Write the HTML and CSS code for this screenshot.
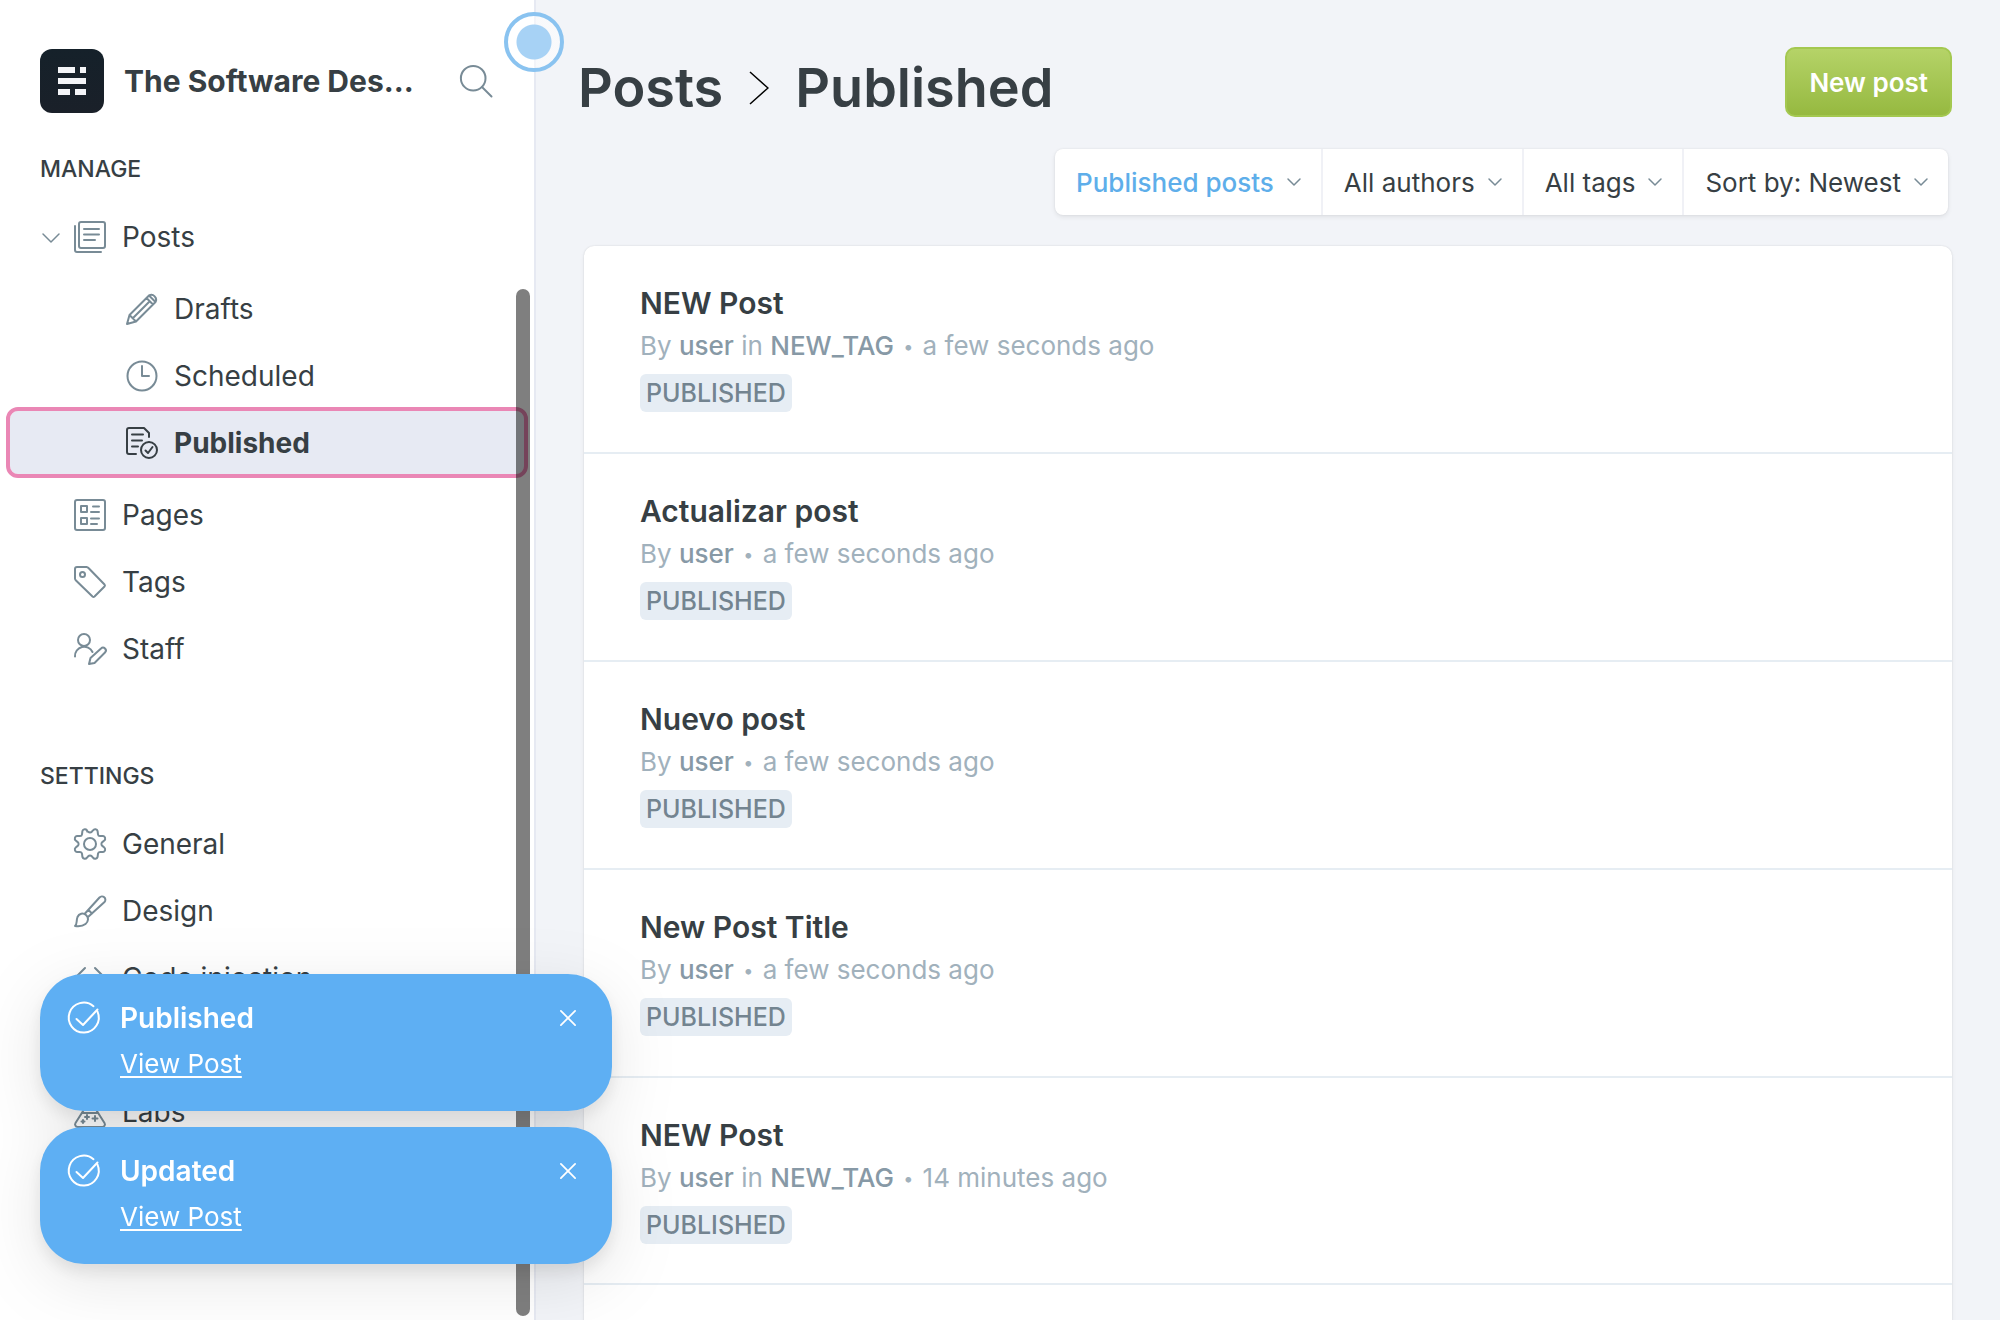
FILE: index.html
```html
<!DOCTYPE html>
<html lang="en">
<head>
<meta charset="utf-8">
<title>Posts</title>
<link rel="stylesheet" href="styles.css">
</head>
<body>
<div class="app">
  <aside class="sidebar">
    <header class="brand">
      <svg class="brand-logo" viewBox="0 0 64 64" aria-hidden="true">
        <defs><linearGradient id="logo-fill" x1="0" y1="0" x2="0" y2="1"><stop offset="0" stop-color="#15212a"/><stop offset="1" stop-color="#1a2029"/></linearGradient></defs>
        <rect width="64" height="64" rx="12" fill="url(#logo-fill)"/>
        <path fill="#f4f5f8" d="M18 18h17v6H18zM40 18h6v6h-6zM18 29h28v6H18zM18 40h12v6H18zM35 40h11v6H35z"/>
      </svg>
      <span class="brand-name">The Software Des...</span>
      <button class="icon-button" type="button" aria-label="Search">
        <svg class="icon" viewBox="0 0 32 32"><circle cx="13.200" cy="13.200" r="12.300"/><path d="M22 22l9.500 9.500"/></svg>
      </button>
    </header>

    <nav class="nav">
      <h2 class="nav-heading">Manage</h2>
      <ul class="nav-list">
        <li>
          <a class="nav-link" href="#posts">
            <svg class="icon caret" viewBox="0 0 18 32"><path d="M1 13l8 8 8-8"/></svg>
            <svg class="icon" viewBox="0 0 32 32"><rect x="5" y="1" width="26" height="26" rx="2"/><path d="M1 5v24a2 2 0 0 0 2 2h24M10 8h15M10 13.500h15M10 19h11"/></svg>
            Posts
          </a>
          <ul class="nav-list nav-sublist">
            <li><a class="nav-link" href="#drafts">
              <svg class="icon" viewBox="0 0 32 32"><path d="M1 31l2.500-9L23 2.500a4.800 4.800 0 0 1 6.500 6.500L10 28.500zM3.500 22l6.500 6.500M20.500 5l6.500 6.500M23 2.500l6.500 6.500M7 25L23.500 8.500"/></svg>
              Drafts</a></li>
            <li><a class="nav-link" href="#scheduled">
              <svg class="icon" viewBox="0 0 32 32"><circle cx="16" cy="16" r="14.500"/><path d="M16 6v10h7"/></svg>
              Scheduled</a></li>
            <li><a class="nav-link is-active" href="#published" aria-current="page">
              <svg class="icon" viewBox="0 0 32 32"><path d="M10 27H3a2 2 0 0 1-2-2V3a2 2 0 0 1 2-2h15l5 5v4M6 7.500h11M6 13.500h10M6 19.500h6"/><circle cx="23" cy="23" r="8"/><path d="M19.500 23.500l2.500 2.500 4.500-6"/></svg>
              Published</a></li>
          </ul>
        </li>
        <li><a class="nav-link nav-link-inset" href="#pages">
          <svg class="icon" viewBox="0 0 32 32"><rect x="1" y="1" width="30" height="30" rx="2"/><path d="M7 7h6v6H7zM7 19h6v6H7zM19 7.500h6M17 13h8M17 19.500h8M17 25h6"/></svg>
          Pages</a></li>
        <li><a class="nav-link nav-link-inset" href="#tags">
          <svg class="icon" viewBox="0 0 32 32"><path d="M1 3v9.500a3 3 0 0 0 1 2L18.500 30.500a1.500 1.500 0 0 0 2 0l10-10a1.500 1.500 0 0 0 0-2L14.500 2a3 3 0 0 0-2-1H3a2 2 0 0 0-2 2z"/><circle cx="8.500" cy="8.500" r="2.500"/></svg>
          Tags</a></li>
        <li><a class="nav-link nav-link-inset" href="#staff">
          <svg class="icon" viewBox="0 0 32 32"><circle cx="10" cy="7" r="6"/><path d="M1 23.500a9.200 9.200 0 0 1 17.500-4.500M15 31l1.500-6L27 15.500a2.600 2.600 0 0 1 4 4L20.500 30z"/></svg>
          Staff</a></li>
      </ul>

      <h2 class="nav-heading nav-heading-settings">Settings</h2>
      <ul class="nav-list">
        <li><a class="nav-link nav-link-inset" href="#general">
          <svg class="icon" viewBox="0 0 32 32"><circle cx="16" cy="16" r="6"/><path d="M13.300 3.600a2.500 2.500 0 0 0-4.900-.5L8 6.300a2 2 0 0 1-2 1.700H3a2.600 2.600 0 0 0-1.300 4.500l2 1.600a2.500 2.500 0 0 1 0 3.800l-2 1.600A2.600 2.600 0 0 0 3 24h3a2 2 0 0 1 2 1.700l.4 3.200a2.600 2.600 0 0 0 4.600.8l1.200-1.400a2.500 2.500 0 0 1 3.600 0l1.200 1.400a2.600 2.600 0 0 0 4.600-.8l.4-3.200a2 2 0 0 1 2-1.700h3a2.600 2.600 0 0 0 1.300-4.500l-2-1.600a2.500 2.500 0 0 1 0-3.800l2-1.600A2.600 2.600 0 0 0 29 8h-3a2 2 0 0 1-2-1.700l-.4-3.200a2.600 2.600 0 0 0-4.600-.8l-1.200 1.400a2.500 2.500 0 0 1-3.600 0z"/></svg>
          General</a></li>
        <li><a class="nav-link nav-link-inset" href="#design">
          <svg class="icon" viewBox="0 0 32 32"><path d="M1 31c2.500-2 1-5 2.500-9 1.500-3.500 5.500-4.500 8.500-2s2.500 6.500-.5 9-7 2.500-10.500 2zM11 18.500L25.500 2.500a3.300 3.300 0 0 1 5 4.500L14 22M14.500 15l3.500 3.500"/></svg>
          Design</a></li>
        <li><a class="nav-link nav-link-inset" href="#code">
          <svg class="icon" viewBox="0 0 32 32"><path d="M11 6L1 16l10 10M21 6l10 10-10 10"/></svg>
          Code injection</a></li>
        <li><a class="nav-link nav-link-inset" href="#integrations" aria-label="Integrations"></a></li>
        <li><a class="nav-link nav-link-inset" href="#labs">
          <svg class="icon" viewBox="0 0 32 32"><path d="M9 1h14M11 1v11L1.500 27a2.600 2.600 0 0 0 2.500 4h24a2.600 2.600 0 0 0 2.500-4L21 12V1M8 17h16M13 19v4M11 21h4M21 20v5M18.500 22.500h5M9 24v3M7.500 25.500h3"/></svg>
          Labs</a></li>
      </ul>
    </nav>
    <div class="scroll-thumb"></div>
    <div class="beacon"></div>
  </aside>

  <main class="content">
    <header class="page-header">
      <h1 class="page-title">
        <a href="#posts">Posts</a>
        <svg class="title-caret" viewBox="0 0 20 34" aria-hidden="true"><path d="M1 1l18 16L1 33"/></svg>
        Published
      </h1>
      <button class="primary-button" type="button">New post</button>
    </header>

    <div class="filters">
      <button class="filter is-selected" type="button">Published posts <svg class="icon filter-caret" viewBox="0 0 12 10"><path d="M0 2l6 6 6-6"/></svg></button>
      <button class="filter" type="button">All authors <svg class="icon filter-caret" viewBox="0 0 12 10"><path d="M0 2l6 6 6-6"/></svg></button>
      <button class="filter" type="button">All tags <svg class="icon filter-caret" viewBox="0 0 12 10"><path d="M0 2l6 6 6-6"/></svg></button>
      <button class="filter" type="button">Sort by: Newest <svg class="icon filter-caret" viewBox="0 0 12 10"><path d="M0 2l6 6 6-6"/></svg></button>
    </div>

    <ol class="post-list">
      <li class="post">
        <h3 class="post-title">NEW Post</h3>
        <p class="post-meta">By <b>user</b> in <b>NEW_TAG</b> <span class="dot">•</span> a few seconds ago</p>
        <span class="badge">Published</span>
      </li>
      <li class="post">
        <h3 class="post-title">Actualizar post</h3>
        <p class="post-meta">By <b>user</b> <span class="dot">•</span> a few seconds ago</p>
        <span class="badge">Published</span>
      </li>
      <li class="post">
        <h3 class="post-title">Nuevo post</h3>
        <p class="post-meta">By <b>user</b> <span class="dot">•</span> a few seconds ago</p>
        <span class="badge">Published</span>
      </li>
      <li class="post">
        <h3 class="post-title">New Post Title</h3>
        <p class="post-meta">By <b>user</b> <span class="dot">•</span> a few seconds ago</p>
        <span class="badge">Published</span>
      </li>
      <li class="post">
        <h3 class="post-title">NEW Post</h3>
        <p class="post-meta">By <b>user</b> in <b>NEW_TAG</b> <span class="dot">•</span> 14 minutes ago</p>
        <span class="badge">Published</span>
      </li>
    </ol>
  </main>
</div>

<div class="toasts" role="status">
  <div class="toast">
    <svg class="icon" viewBox="0 0 32 32"><path d="M25.500 4.200a15 15 0 1 0 4 5.400"/><path d="M8.500 17l6.500 6L29.500 7.500"/></svg>
    <div class="toast-text"><strong class="toast-title">Published</strong><a class="toast-link" href="#view">View Post</a></div>
    <button class="toast-close" type="button" aria-label="Close"><svg class="icon" viewBox="0 0 18 18"><path d="M1 1l16 16M17 1L1 17"/></svg></button>
  </div>
  <div class="toast">
    <svg class="icon" viewBox="0 0 32 32"><path d="M25.500 4.200a15 15 0 1 0 4 5.400"/><path d="M8.500 17l6.500 6L29.500 7.500"/></svg>
    <div class="toast-text"><strong class="toast-title">Updated</strong><a class="toast-link" href="#view">View Post</a></div>
    <button class="toast-close" type="button" aria-label="Close"><svg class="icon" viewBox="0 0 18 18"><path d="M1 1l16 16M17 1L1 17"/></svg></button>
  </div>
</div>
</body>
</html>
```
FILE: styles.css
```css
* { box-sizing: border-box; }

body {
  margin: 0;
  height: 100vh;
  overflow: hidden;
  font-family: Inter, "Liberation Sans", sans-serif;
  font-size: 28px;
  color: #373f44;
  background: #f2f4f8;
}

h1, h2, h3, p, ul, ol { margin: 0; padding: 0; }
ul, ol { list-style: none; }
a { color: inherit; text-decoration: none; }
button { padding: 0; border: 0; background: none; font: inherit; color: inherit; }

.icon {
  flex: none;
  width: 32px;
  height: 32px;
  fill: none;
  stroke: #788b96;
  stroke-width: 2;
  stroke-linecap: round;
  stroke-linejoin: round;
  overflow: visible;
}

.app { display: flex; height: 100vh; }

/* Sidebar */
.sidebar {
  position: relative;
  flex: none;
  width: 536px;
  background: #fff;
  border-right: 2px solid #e6e9f2;
}

.brand {
  display: flex;
  align-items: center;
  gap: 20px;
  padding: 49px 42px 0 40px;
}
.brand-logo { flex: none; width: 64px; height: 64px; }
.brand-name {
  white-space: nowrap;
  font-size: 30px;
  font-weight: 700;
  line-height: 40px;
}
.icon-button { display: flex; margin-left: auto; }

.nav-heading {
  padding: 44px 40px 24px;
  font-size: 23px;
  font-weight: 500;
  line-height: 24px;
  text-transform: uppercase;
}
.nav-heading-settings { padding-top: 84px; }

.nav-list { display: grid; gap: 4px; }
.nav-sublist { padding: 9px 0 5px; }
.nav-link {
  display: flex;
  align-items: center;
  gap: 16px;
  height: 63px;
  padding-left: 42px;
}
.nav-link-inset { padding-left: 74px; }
.nav-sublist .nav-link { padding-left: 126px; }
.caret { width: 18px; margin-right: -2px; stroke-width: 1.5; }

.nav-sublist .is-active {
  margin: 0 10px;
  padding-left: 116px;
  border-radius: 8px;
  outline: 4px solid #ea87b5;
  background: #e7eaf3;
  font-weight: 700;
}
.is-active .icon { stroke: #373f44; }

.scroll-thumb {
  position: absolute;
  top: 289px;
  right: 4px;
  bottom: 4px;
  width: 14px;
  border-radius: 7px;
  background: rgba(0, 0, 0, 0.5);
}

.beacon {
  position: absolute;
  top: 12px;
  right: -30px;
  width: 60px;
  height: 60px;
  border: 4px solid #8ac3f0;
  border-radius: 50%;
  background: radial-gradient(circle, #a7d2f5 0 17px, rgba(255, 255, 255, 0.5) 18px);
}

/* Main column */
.content { flex: 1; min-width: 0; padding: 47px 48px 0 42px; }

.page-header { display: flex; justify-content: space-between; align-items: flex-start; }
.page-title {
  display: flex;
  align-items: center;
  gap: 26px;
  padding-top: 8px;
  font-size: 54px;
  font-weight: 600;
  line-height: 66px;
}
.title-caret { width: 20px; height: 34px; fill: none; stroke: #000; stroke-width: 1.5; }

.primary-button {
  height: 70px;
  padding: 0 22px;
  border: 2px solid #a4c850;
  border-radius: 10px;
  background: linear-gradient(#b5d368, #96b940);
  color: #fff;
  font-size: 26px;
  font-weight: 600;
}

.filters {
  display: flex;
  width: fit-content;
  margin: 28px 4px 0 auto;
  border-radius: 8px;
  background: #fff;
  box-shadow: 0 0 2px rgba(0, 0, 0, 0.08), 0 2px 5px rgba(0, 0, 0, 0.08);
}
.filter {
  display: flex;
  align-items: center;
  gap: 14px;
  height: 66px;
  padding: 0 21px;
  font-size: 26px;
}
.filter + .filter { border-left: 2px solid #f0f1f6; }
.filter.is-selected { color: #5eaeea; font-weight: 500; }
.filter-caret { width: 12px; height: 10px; stroke-width: 1.5; }

.post-list {
  margin: 31px 0 0 6px;
  border-radius: 10px;
  background: #fff;
  box-shadow: 0 0 2px rgba(0, 0, 0, 0.12), 0 2px 5px rgba(0, 0, 0, 0.05);
}
.post {
  min-height: 208px;
  padding: 39px 56px 0;
  border-bottom: 2px solid #e6edf3;
}
.post:last-child { min-height: 260px; border: 0; background: linear-gradient(#e6edf3, #e6edf3) 0 205px / 100% 2px no-repeat; }
.post-title { font-size: 30px; font-weight: 600; line-height: 36px; }
.post-meta { padding-top: 9px; font-size: 26px; line-height: 32px; color: #a1b1bc; }
.post-meta b { font-weight: 500; color: #8799a6; }
.dot { margin: 0 2px; font-size: 18px; vertical-align: 2px; line-height: 20px; }
.badge {
  display: block;
  width: fit-content;
  margin-top: 12px;
  padding: 0 6px;
  border-radius: 6px;
  background: #e6edf4;
  color: #738490;
  font-size: 25px;
  font-weight: 500;
  line-height: 38px;
  text-transform: uppercase;
}

/* Toasts: one shadow for the whole stack, so no card darkens its neighbour */
.toasts {
  position: fixed;
  left: 40px;
  bottom: 56px;
  display: grid;
  gap: 16px;
  width: 572px;
  filter: drop-shadow(0 8px 8px rgba(0, 0, 0, 0.08)) drop-shadow(0 16px 32px rgba(0, 0, 0, 0.1));
}
.toast {
  display: flex;
  align-items: flex-start;
  gap: 20px;
  height: 137px;
  padding: 28px 28px 0;
  border-radius: 44px;
  background: #5eaff3;
  color: #fff;
}
.toast .icon { stroke: #fff; }
.toast-text { display: grid; flex: 1; justify-items: start; }
.toast-title { font-weight: 600; line-height: 32px; }
.toast-link { margin-top: 14px; font-size: 26px; line-height: 32px; text-decoration: underline; text-underline-offset: 3px; }
.toast-close { display: flex; padding: 8px; }
.toast-close .icon { width: 16px; height: 16px; }
```
